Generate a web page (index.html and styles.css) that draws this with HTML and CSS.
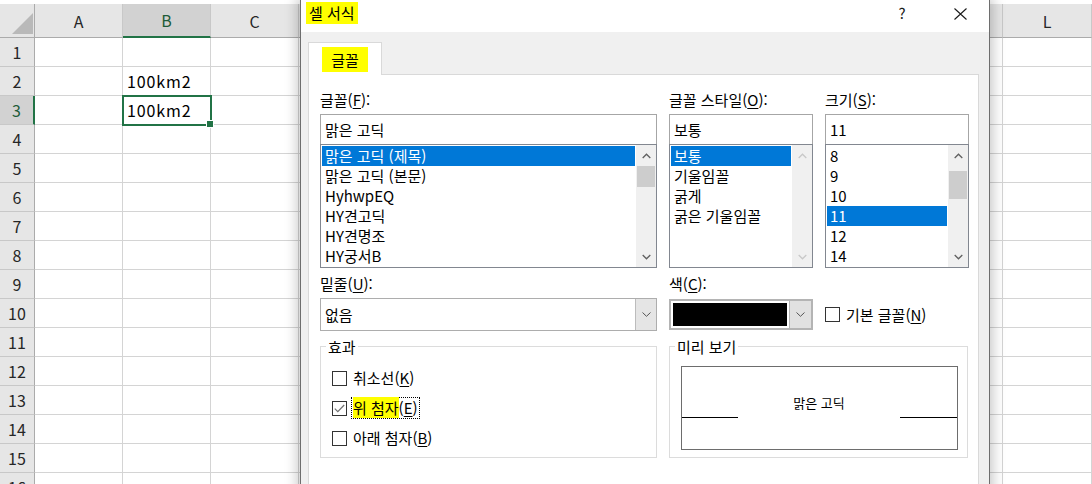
FILE: index.html
```html
<!DOCTYPE html>
<html lang="ko">
<head>
<meta charset="utf-8">
<title>셀 서식</title>
<link rel="stylesheet" href="styles.css">
</head>
<body>
<div class="sheet">
  <div class="corner"><svg width="21" height="21" viewBox="0 0 21 21"><polygon points="21,0 21,21 0,21" fill="#b9b9b9"/></svg></div>
  <div class="ch">A</div><div class="ch on">B</div><div class="ch">C</div><div class="ch">D</div><div class="ch">E</div><div class="ch">F</div><div class="ch">G</div><div class="ch">H</div><div class="ch">I</div><div class="ch">J</div><div class="ch">K</div><div class="ch">L</div>

  <div class="rh">1</div><div class="c"></div><div class="c"></div><div class="c"></div><div class="c"></div><div class="c"></div><div class="c"></div><div class="c"></div><div class="c"></div><div class="c"></div><div class="c"></div><div class="c"></div><div class="c"></div>
  <div class="rh">2</div><div class="c"></div><div class="c">100km2</div><div class="c"></div><div class="c"></div><div class="c"></div><div class="c"></div><div class="c"></div><div class="c"></div><div class="c"></div><div class="c"></div><div class="c"></div><div class="c"></div>
  <div class="rh on">3</div><div class="c"></div><div class="c sel">100km2</div><div class="c"></div><div class="c"></div><div class="c"></div><div class="c"></div><div class="c"></div><div class="c"></div><div class="c"></div><div class="c"></div><div class="c"></div><div class="c"></div>
  <div class="rh">4</div><div class="c"></div><div class="c"></div><div class="c"></div><div class="c"></div><div class="c"></div><div class="c"></div><div class="c"></div><div class="c"></div><div class="c"></div><div class="c"></div><div class="c"></div><div class="c"></div>
  <div class="rh">5</div><div class="c"></div><div class="c"></div><div class="c"></div><div class="c"></div><div class="c"></div><div class="c"></div><div class="c"></div><div class="c"></div><div class="c"></div><div class="c"></div><div class="c"></div><div class="c"></div>
  <div class="rh">6</div><div class="c"></div><div class="c"></div><div class="c"></div><div class="c"></div><div class="c"></div><div class="c"></div><div class="c"></div><div class="c"></div><div class="c"></div><div class="c"></div><div class="c"></div><div class="c"></div>
  <div class="rh">7</div><div class="c"></div><div class="c"></div><div class="c"></div><div class="c"></div><div class="c"></div><div class="c"></div><div class="c"></div><div class="c"></div><div class="c"></div><div class="c"></div><div class="c"></div><div class="c"></div>
  <div class="rh">8</div><div class="c"></div><div class="c"></div><div class="c"></div><div class="c"></div><div class="c"></div><div class="c"></div><div class="c"></div><div class="c"></div><div class="c"></div><div class="c"></div><div class="c"></div><div class="c"></div>
  <div class="rh">9</div><div class="c"></div><div class="c"></div><div class="c"></div><div class="c"></div><div class="c"></div><div class="c"></div><div class="c"></div><div class="c"></div><div class="c"></div><div class="c"></div><div class="c"></div><div class="c"></div>
  <div class="rh">10</div><div class="c"></div><div class="c"></div><div class="c"></div><div class="c"></div><div class="c"></div><div class="c"></div><div class="c"></div><div class="c"></div><div class="c"></div><div class="c"></div><div class="c"></div><div class="c"></div>
  <div class="rh">11</div><div class="c"></div><div class="c"></div><div class="c"></div><div class="c"></div><div class="c"></div><div class="c"></div><div class="c"></div><div class="c"></div><div class="c"></div><div class="c"></div><div class="c"></div><div class="c"></div>
  <div class="rh">12</div><div class="c"></div><div class="c"></div><div class="c"></div><div class="c"></div><div class="c"></div><div class="c"></div><div class="c"></div><div class="c"></div><div class="c"></div><div class="c"></div><div class="c"></div><div class="c"></div>
  <div class="rh">13</div><div class="c"></div><div class="c"></div><div class="c"></div><div class="c"></div><div class="c"></div><div class="c"></div><div class="c"></div><div class="c"></div><div class="c"></div><div class="c"></div><div class="c"></div><div class="c"></div>
  <div class="rh">14</div><div class="c"></div><div class="c"></div><div class="c"></div><div class="c"></div><div class="c"></div><div class="c"></div><div class="c"></div><div class="c"></div><div class="c"></div><div class="c"></div><div class="c"></div><div class="c"></div>
  <div class="rh">15</div><div class="c"></div><div class="c"></div><div class="c"></div><div class="c"></div><div class="c"></div><div class="c"></div><div class="c"></div><div class="c"></div><div class="c"></div><div class="c"></div><div class="c"></div><div class="c"></div>
  <div class="rh">16</div><div class="c"></div><div class="c"></div><div class="c"></div><div class="c"></div><div class="c"></div><div class="c"></div><div class="c"></div><div class="c"></div><div class="c"></div><div class="c"></div><div class="c"></div><div class="c"></div>
</div>

<div class="dialog">
  <div class="titlebar">
    <div class="title"><span class="hl title-hl">셀 서식</span></div>
    <div class="tbtn help">?</div>
    <div class="tbtn close"><svg width="13" height="12" viewBox="0 0 13 12"><path d="M0.5 0.5 L12.5 11.5 M12.5 0.5 L0.5 11.5" stroke="#1a1a1a" stroke-width="1.1" fill="none"/></svg></div>
  </div>
  <div class="dbody">
    <div class="tabs"><div class="tab"><span class="hl tab-hl">글꼴</span></div></div>
    <div class="panel">
      <div class="grid3">
        <div class="col">
          <div class="lbl">글꼴(<u>F</u>):</div>
          <div class="input">맑은 고딕</div>
          <div class="list">
            <div class="items">
              <div class="item sel">맑은 고딕 (제목)</div>
              <div class="item">맑은 고딕 (본문)</div>
              <div class="item">HyhwpEQ</div>
              <div class="item">HY견고딕</div>
              <div class="item">HY견명조</div>
              <div class="item">HY궁서B</div>
            </div>
            <div class="sb">
              <div class="arrow"><svg width="9" height="6" viewBox="0 0 9 6"><polyline points="0.7,5 4.5,1.2 8.3,5" fill="none" stroke="#606060" stroke-width="1.3"/></svg></div>
              <div class="track"><div class="thumb t1"></div></div>
              <div class="arrow"><svg width="9" height="6" viewBox="0 0 9 6"><polyline points="0.7,1 4.5,4.8 8.3,1" fill="none" stroke="#606060" stroke-width="1.3"/></svg></div>
            </div>
          </div>
        </div>
        <div class="col">
          <div class="lbl">글꼴 스타일(<u>O</u>):</div>
          <div class="input">보통</div>
          <div class="list">
            <div class="items">
              <div class="item sel">보통</div>
              <div class="item">기울임꼴</div>
              <div class="item">굵게</div>
              <div class="item">굵은 기울임꼴</div>
            </div>
            <div class="sb">
              <div class="arrow"><svg width="9" height="6" viewBox="0 0 9 6"><polyline points="0.7,5 4.5,1.2 8.3,5" fill="none" stroke="#c8c8c8" stroke-width="1.3"/></svg></div>
              <div class="track"></div>
              <div class="arrow"><svg width="9" height="6" viewBox="0 0 9 6"><polyline points="0.7,1 4.5,4.8 8.3,1" fill="none" stroke="#c8c8c8" stroke-width="1.3"/></svg></div>
            </div>
          </div>
        </div>
        <div class="col">
          <div class="lbl">크기(<u>S</u>):</div>
          <div class="input">11</div>
          <div class="list">
            <div class="items">
              <div class="item">8</div>
              <div class="item">9</div>
              <div class="item">10</div>
              <div class="item sel">11</div>
              <div class="item">12</div>
              <div class="item">14</div>
            </div>
            <div class="sb">
              <div class="arrow"><svg width="9" height="6" viewBox="0 0 9 6"><polyline points="0.7,5 4.5,1.2 8.3,5" fill="none" stroke="#606060" stroke-width="1.3"/></svg></div>
              <div class="track"><div class="thumb t2"></div></div>
              <div class="arrow"><svg width="9" height="6" viewBox="0 0 9 6"><polyline points="0.7,1 4.5,4.8 8.3,1" fill="none" stroke="#606060" stroke-width="1.3"/></svg></div>
            </div>
          </div>
        </div>
      </div>

      <div class="grid3 mid">
        <div class="col">
          <div class="lbl">밑줄(<u>U</u>):</div>
          <div class="combo">
            <div class="combo-text">없음</div>
            <div class="combo-btn"><svg width="9" height="5" viewBox="0 0 9 5"><polyline points="0.5,0.5 4.5,4.3 8.5,0.5" fill="none" stroke="#555" stroke-width="1"/></svg></div>
          </div>
        </div>
        <div class="col">
          <div class="lbl">색(<u>C</u>):</div>
          <div class="color">
            <div class="swatch-wrap"><div class="swatch"></div></div>
            <div class="color-btn"><svg width="9" height="5" viewBox="0 0 9 5"><polyline points="0.5,0.5 4.5,4.3 8.5,0.5" fill="none" stroke="#555" stroke-width="1"/></svg></div>
          </div>
        </div>
        <div class="col">
          <div class="lbl"></div>
          <div class="cbrow normal">
            <span class="box"></span><span class="cbtext">기본 글꼴(<u>N</u>)</span>
          </div>
        </div>
      </div>

      <div class="groups">
        <div class="group effects">
          <div class="legend">효과</div>
          <div class="cbrow first"><span class="box"></span><span class="cbtext">취소선(<u>K</u>)</span></div>
          <div class="cbrow"><span class="box checked"><svg width="11" height="9" viewBox="0 0 11 9"><polyline points="0.8,4.6 3.8,7.6 10.2,1" fill="none" stroke="#707070" stroke-width="1.2"/></svg></span><span class="cbtext focus"><span class="hl">위 첨자</span>(<u>E</u>)</span></div>
          <div class="cbrow"><span class="box"></span><span class="cbtext">아래 첨자(<u>B</u>)</span></div>
        </div>
        <div class="group preview">
          <div class="legend">미리 보기</div>
          <div class="pv">
            <div class="pv-row">
              <div class="pv-line l"></div>
              <div class="pv-text">맑은 고딕</div>
              <div class="pv-line r"></div>
            </div>
          </div>
        </div>
      </div>
    </div>
  </div>
</div>
</body>
</html>
```

FILE: styles.css
```css
* { box-sizing: border-box; }
html, body { margin: 0; padding: 0; }
body {
  width: 1092px;
  height: 484px;
  overflow: hidden;
  position: relative;
  background: #fff;
  font-family: "Noto Sans CJK KR", "Noto Sans", sans-serif;
  color: #000;
}

/* ---------- spreadsheet ---------- */
.sheet {
  display: grid;
  grid-template-columns: 35px repeat(11, 88px) 89px;
  grid-template-rows: 34px repeat(16, 29px);
  padding-top: 4px;
  font-size: 16px;
}
.corner {
  background: #e6e6e6;
  border-right: 1px solid #ababab;
  border-bottom: 1px solid #ababab;
  display: flex;
  align-items: flex-end;
  justify-content: flex-end;
  padding: 0 1px 3px 0;
}
.corner svg { display: block; }
.ch {
  background: #e6e6e6;
  border-right: 1px solid #c8c8c8;
  border-bottom: 1px solid #ababab;
  display: flex;
  align-items: center;
  justify-content: center;
  color: #262626;
}
.ch.on {
  background: #d2d2d2;
  border-bottom: 2px solid #217346;
  color: #1e5c39;
}
.rh {
  background: #e6e6e6;
  border-right: 1px solid #ababab;
  border-bottom: 1px solid #c8c8c8;
  display: flex;
  align-items: center;
  justify-content: center;
  color: #262626;
}
.rh.on {
  background: #d2d2d2;
  border-right: 2px solid #217346;
  color: #1e5c39;
}
.c {
  border-right: 1px solid #d4d4d4;
  border-bottom: 1px solid #d4d4d4;
  display: flex;
  align-items: center;
  padding-left: 4px;
  letter-spacing: 0.9px;
  white-space: nowrap;
}
.c.sel {
  position: relative;
  outline: 2px solid #217346;
  outline-offset: -1px;
}
.c.sel::after {
  content: "";
  position: absolute;
  right: -4px;
  bottom: -4px;
  width: 6px;
  height: 6px;
  background: #217346;
  border: 1px solid #fff;
}

/* ---------- dialog ---------- */
.dialog {
  position: absolute;
  left: 300px;
  top: 0;
  width: 690px;
  height: 500px;
  background: #f0f0f0;
  border-left: 1px solid #6e6e6e;
  border-right: 1px solid #6e6e6e;
  box-shadow: 0 0 12px 3px rgba(0, 0, 0, 0.22);
  display: flex;
  flex-direction: column;
  font-size: 15px;
}
.hl { background: #ffff00; }
.titlebar {
  height: 32px;
  background: #fff;
  display: flex;
  align-items: center;
  padding: 0 0 7px 5px;
}
.title { flex: 1; }
.title-hl {
  display: inline-block;
  padding: 0 3px;
  line-height: 22px;
}
.tbtn {
  width: 58px;
  display: flex;
  justify-content: center;
  align-items: center;
  height: 22px;
}
.help { font-size: 15px; color: #1a1a1a; }
.close svg { display: block; margin-top: 2px; }

.dbody {
  flex: 1;
  display: flex;
  flex-direction: column;
  padding: 10px 10px 0 7px;
}
.tabs { display: flex; }
.tab {
  width: 74px;
  height: 33px;
  background: #fff;
  border: 1px solid #d9d9d9;
  border-bottom: none;
  margin-bottom: -1px;
  position: relative;
  z-index: 1;
  display: flex;
  align-items: center;
  justify-content: center;
}
.tab-hl {
  display: inline-block;
  padding: 0 9px;
  line-height: 25px;
}
.panel {
  flex: 1;
  background: #fff;
  border: 1px solid #d9d9d9;
  padding: 14px 0 0 11px;
}

.grid3 {
  display: grid;
  grid-template-columns: 337px 144px 144px;
  column-gap: 12px;
}
.col { display: flex; flex-direction: column; }
.lbl {
  height: 22px;
  line-height: 22px;
  margin-bottom: 3px;
  white-space: nowrap;
}
.lbl u, .cbtext u { text-underline-offset: 2px; }
.input {
  height: 31px;
  border: 1px solid #a6a6a6;
  background: #fff;
  display: flex;
  align-items: center;
  padding-left: 4px;
}
.list {
  height: 124px;
  margin-top: -1px;
  border: 1px solid #828790;
  background: #fff;
  display: flex;
}
.items {
  flex: 1;
  padding: 1px 1px 0 1px;
  overflow: hidden;
}
.item {
  height: 20px;
  line-height: 20px;
  padding-left: 3px;
  white-space: nowrap;
}
.item.sel { background: #0078d7; color: #fff; }
.sb {
  width: 20px;
  background: #f0f0f0;
  display: flex;
  flex-direction: column;
}
.arrow {
  height: 21px;
  display: flex;
  align-items: center;
  justify-content: center;
}
.arrow svg { display: block; }
.track { flex: 1; }
.thumb { background: #cdcdcd; margin: 0 1px; }
.thumb.t1 { height: 21px; margin-top: 0; }
.thumb.t2 { height: 28px; margin-top: 5px; }

.mid { margin-top: 5px; }
.combo {
  height: 33px;
  border: 1px solid #adadad;
  background: #fff;
  display: flex;
}
.combo-text {
  flex: 1;
  display: flex;
  align-items: center;
  padding-left: 4px;
}
.combo-btn {
  width: 21px;
  background: #e5e5e5;
  border-left: 1px solid #bcbcbc;
  display: flex;
  align-items: center;
  justify-content: center;
}
.color {
  height: 31px;
  margin-top: 1px;
  border: 2px solid #b4b4b4;
  background: #fff;
  display: flex;
}
.swatch-wrap { flex: 1; padding: 2px; }
.swatch { height: 100%; background: #000; }
.color-btn {
  width: 22px;
  background: #e1e1e1;
  border-left: 1px solid #b4b4b4;
  display: flex;
  align-items: center;
  justify-content: center;
}

.cbrow {
  height: 30px;
  display: flex;
  align-items: center;
  white-space: nowrap;
}
.cbrow.normal { height: 33px; }
.box {
  width: 15px;
  height: 15px;
  border: 1px solid #333;
  background: #fff;
  margin-right: 6px;
  display: flex;
  align-items: center;
  justify-content: center;
  flex: none;
}
.cbtext { line-height: 20px; }
.cbtext.focus {
  margin-left: -2px;
  padding: 0 1px;
  border: 1px dotted #000;
  line-height: 20px;
}

.groups {
  display: grid;
  grid-template-columns: 337px 299px;
  column-gap: 12px;
  margin-top: 15px;
}
.group {
  border: 1px solid #dcdcdc;
  padding: 0 10px 4px 11px;
}
.legend {
  width: fit-content;
  margin: -10px 0 0 -6px;
  padding: 0 2px;
  background: #fff;
  line-height: 20px;
}
.cbrow.first { margin-top: 6px; }
.pv {
  margin-top: 9px;
  height: 84px;
  border: 1px solid #6d6d6d;
  margin-right: -1px;
  padding-top: 25px;
}
.pv-row {
  display: flex;
  align-items: flex-end;
  height: 22px;
}
.pv-line {
  height: 0;
  border-bottom: 1px solid #000;
  margin-bottom: -4px;
}
.pv-line.l { width: 56px; }
.pv-line.r { width: 57px; }
.pv-text {
  flex: 1;
  text-align: center;
  font-size: 13px;
  line-height: 22px;
}
```
